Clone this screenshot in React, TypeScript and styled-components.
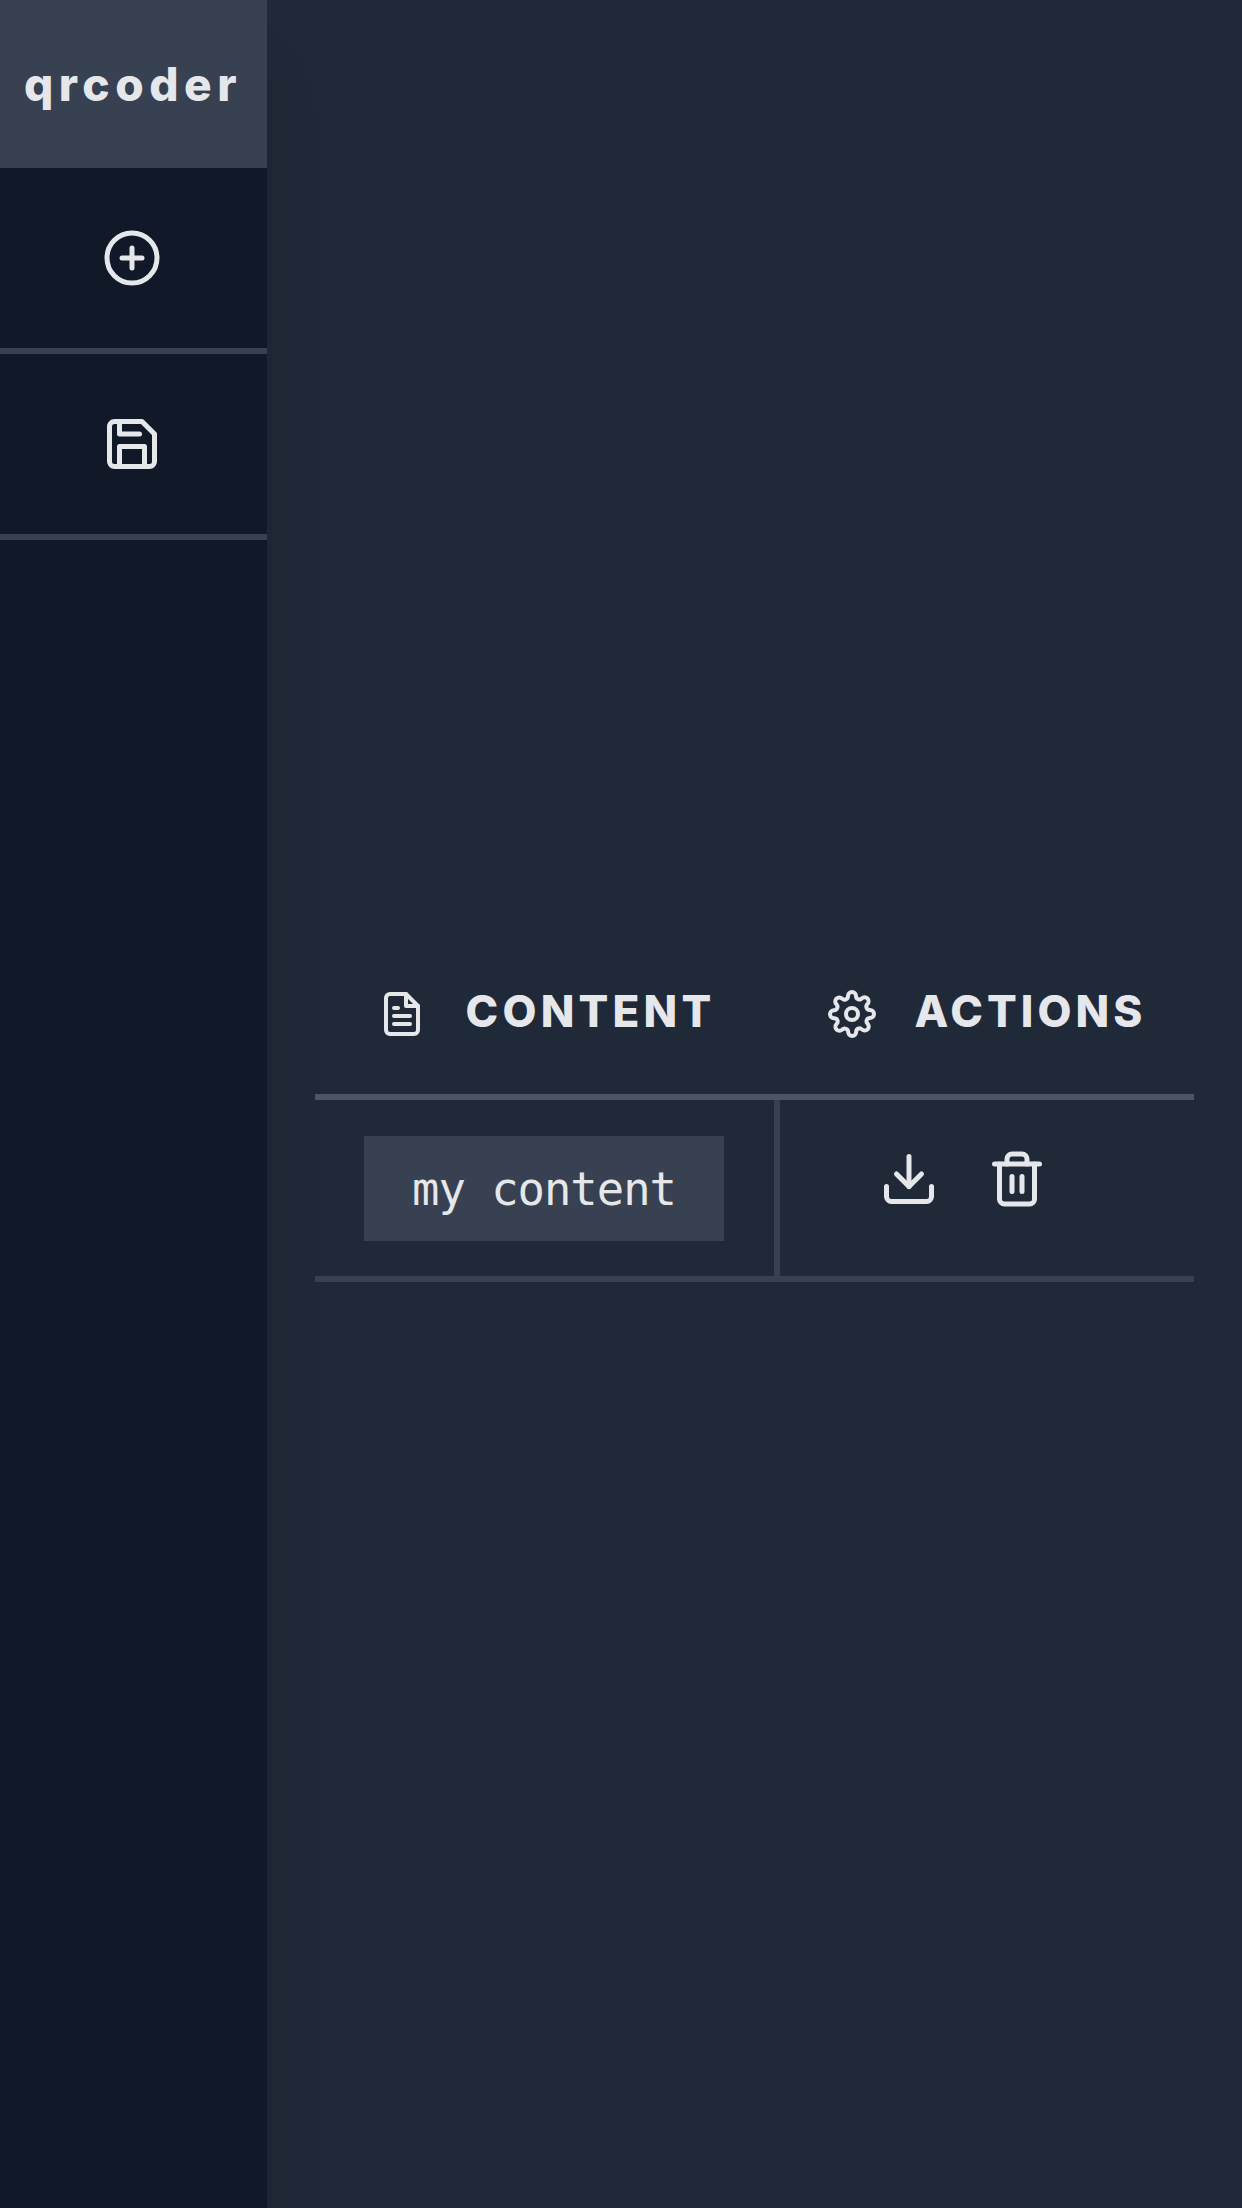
import React from 'react';
import styled, { createGlobalStyle } from 'styled-components';
import { FiDownload, FiFileText, FiPlusCircle, FiSave, FiSettings, FiTrash2 } from 'react-icons/fi';

const GlobalStyle = createGlobalStyle`
  *, *::before, *::after { box-sizing: border-box; }
  body { margin: 0; background: #1f2937; }
  svg { display: block; flex: none; }
`;

const Page = styled.div`
  display: flex;
  height: 2208px;
  background: #1f2937;
  color: #e5e7eb;
  font-family: Inter, 'Liberation Sans', sans-serif;
`;

const Sidebar = styled.nav`
  display: flex;
  flex-direction: column;
  flex: none;
  width: 267px;
  background: #111827;
  box-shadow: 0 60px 75px -15px rgba(0, 0, 0, 0.1), 0 24px 30px -15px rgba(0, 0, 0, 0.04);
`;

const Brand = styled.h1`
  display: flex;
  align-items: center;
  height: 168px;
  margin: 0;
  padding: 0 0 0 24px;
  background: #374151;
  font-size: 46px;
  font-weight: 800;
  line-height: 72px;
  letter-spacing: 5.5px;
`;

const NavButton = styled.button`
  display: flex;
  justify-content: center;
  padding: 60px 3px 60px 0;
  border: 0;
  border-bottom: 6px solid #374151;
  background: transparent;
  color: inherit;
  font-size: 60px;
`;

const Main = styled.main`
  display: flex;
  flex: 1;
  flex-direction: column;
  justify-content: center;
  padding: 0 48px;
`;

const Row = styled.div<{ $head?: boolean }>`
  display: grid;
  grid-template-columns: 465px 1fr;
  height: ${(p) => (p.$head ? 174 : 182)}px;
  border-bottom: 6px solid ${(p) => (p.$head ? '#4b5563' : '#374151')};
`;

const HeadCell = styled.div<{ $inset: number; $gap: number; $tracking: number }>`
  display: flex;
  align-items: center;
  gap: ${(p) => p.$gap}px;
  padding: 2px 0 0 ${(p) => p.$inset}px;
  font-size: 44px;
  font-weight: 800;
  line-height: 72px;
  letter-spacing: ${(p) => p.$tracking}px;
  white-space: nowrap;

  svg {
    width: 48px;
    height: 48px;
    margin-top: 6px;
  }
`;

const ContentCell = styled.div`
  display: flex;
  align-items: flex-start;
  padding: 36px 48px 0 49px;
  border-right: 6px solid #374151;
`;

const Code = styled.code`
  width: 360px;
  height: 105px;
  padding-left: 48px;
  background: #374151;
  font-family: 'DejaVu Sans Mono', monospace;
  font-size: 45.5px;
  line-height: 107px;
  letter-spacing: -1px;
  white-space: nowrap;
`;

const ActionsCell = styled.div`
  display: flex;
  align-items: flex-start;
  gap: 48px;
  padding: 49px 0 0 99px;
`;

const IconButton = styled.button`
  padding: 0;
  border: 0;
  background: transparent;
  color: inherit;
  font-size: 60px;
`;

export default function App() {
  return (
    <>
      <GlobalStyle />
      <Page>
        <Sidebar>
          <Brand>qrcoder</Brand>
          <NavButton aria-label="Add"><FiPlusCircle /></NavButton>
          <NavButton aria-label="Save"><FiSave /></NavButton>
        </Sidebar>
        <Main>
          <Row $head>
            <HeadCell $inset={63} $gap={39.5} $tracking={4.2}><FiFileText />CONTENT</HeadCell>
            <HeadCell $inset={48} $gap={38.5} $tracking={4}><FiSettings />ACTIONS</HeadCell>
          </Row>
          <Row>
            <ContentCell><Code>my content</Code></ContentCell>
            <ActionsCell>
              <IconButton aria-label="Download"><FiDownload /></IconButton>
              <IconButton aria-label="Delete"><FiTrash2 /></IconButton>
            </ActionsCell>
          </Row>
        </Main>
      </Page>
    </>
  );
}
